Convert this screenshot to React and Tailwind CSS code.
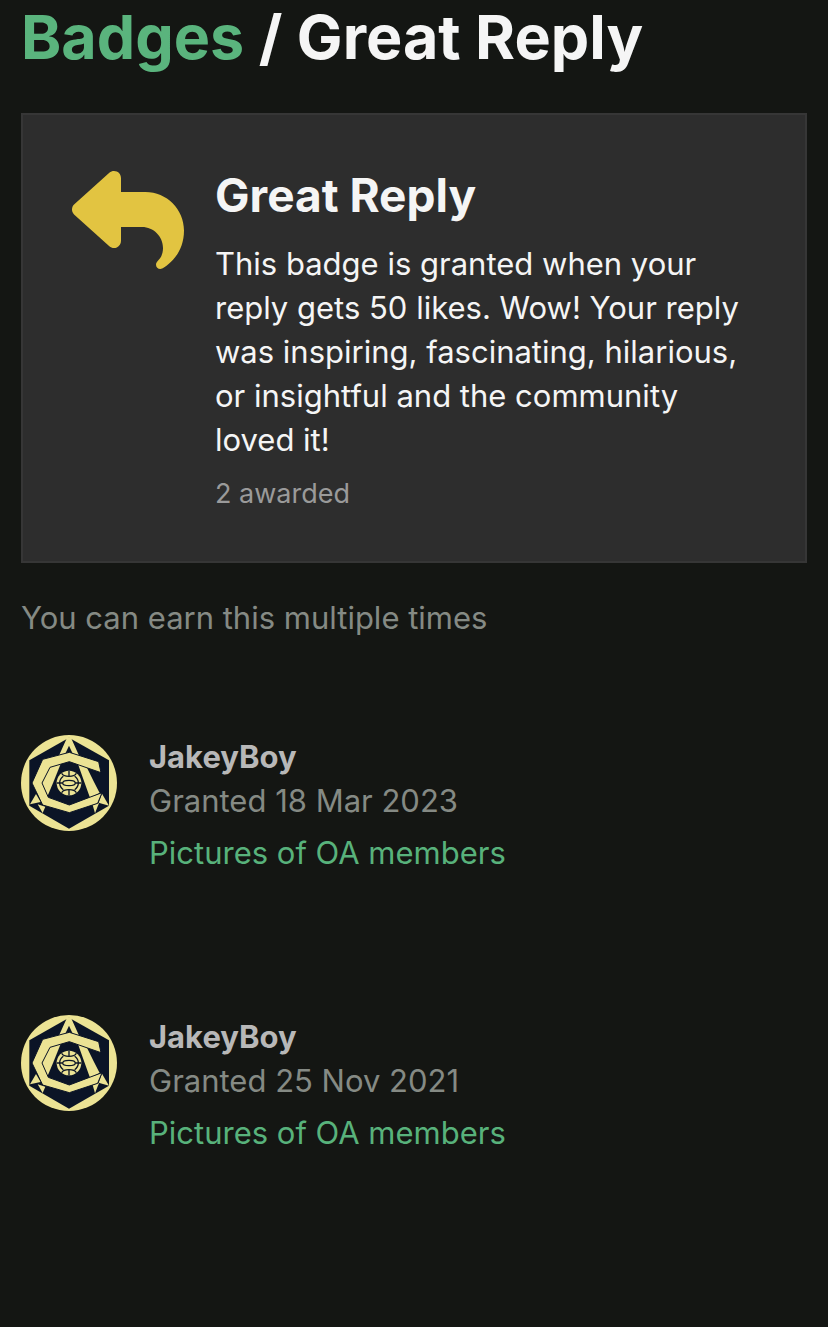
import React from 'react';
import { FaReply } from 'react-icons/fa6';

const grants = [
    { id: 1, username: 'JakeyBoy', date: '18 Mar 2023', topic: 'Pictures of OA members' },
    { id: 2, username: 'JakeyBoy', date: '25 Nov 2021', topic: 'Pictures of OA members' },
];

const Avatar = () => (
    <svg className="w-24 h-24 shrink-0" viewBox="33 30 288 288" aria-hidden="true">
        <circle cx="177" cy="174" r="144" fill="#ece394" />
        <path d="M177 38L297 106V242L177 311L58 242V106Z" fill="#0b1426" />
        {/* A */}
        <g fill="#ece394">
            <path d="M171 38H183L208 94L190 90L177 62L164 90L146 94Z" />
            <path d="M120 122L154 112L130 172L113 212L95 174Z" />
            <path d="M202 112L228 122L252 171L269 204L240 218L223 171Z" />
            <path d="M78 207L92 231L60 238Z" />
            <path d="M83 238L106 245L98 264Z" />
            <path d="M276 206L297 242L266 233Z" />
            <path d="M248 240L267 234L255 265Z" />
        </g>
        {/* C */}
        <path
            d="M178 82L266 110L273 143L178 110L120 127L96 174L115 217L178 240L236 218L276 203L263 235L178 263L98 240L66 174L98 103Z"
            fill="#ece394"
            stroke="#0b1426"
            strokeWidth="3"
        />
        {/* balón */}
        <circle cx="177" cy="174" r="37" fill="#ece394" />
        <g fill="none" stroke="#0b1426" strokeWidth="4">
            <ellipse cx="177" cy="174" rx="19" ry="8" />
            <path d="M141 174H158M196 174H213M177 138V153M177 195V210" />
            <path d="M155 145Q159 154 177 154Q195 154 199 145M155 203Q159 194 177 194Q195 194 199 203" />
            <path d="M160 154Q149 162 149 174Q149 186 160 194M194 154Q205 162 205 174Q205 186 194 194" />
        </g>
    </svg>
);

const BadgeCard = () => (
    <section className="flex gap-[31px] border-2 border-[#363636] bg-[#2d2d2d] px-[49px] pt-[49px] pb-[47px]">
        <FaReply className="w-28 h-28 shrink-0 text-[#e2c441]" />
        <div className="flex-1">
            <h2 className="text-[46px] leading-[62px] font-bold text-[#f5f5f5]">Great Reply</h2>
            <p className="mt-4 text-[31px] leading-[44px] text-[#f5f5f5]">
                This badge is granted when your reply gets 50 likes. Wow! Your reply was inspiring,
                fascinating, hilarious, or insightful and the community loved it!
            </p>
            <p className="mt-3 text-[27px] leading-[40px] text-[#9a9a9a]">2 awarded</p>
        </div>
    </section>
);

const GrantItem = ({ grant }) => (
    <li className="flex gap-8 h-[280px]">
        <Avatar />
        <div className="text-[31px] leading-[44px]">
            <a href="#user" className="block font-bold text-[#b8b8b8]">{grant.username}</a>
            <p className="text-[#858a84]">Granted {grant.date}</p>
            <a href="#topic" className="block mt-2 text-[#58b27b]">{grant.topic}</a>
        </div>
    </li>
);

const App = () => {
    return (
        <main className="min-h-screen bg-[#141613] px-[21px] font-['Inter',sans-serif]">
            <h1 className="pb-[39px] text-[61px] leading-[74px] font-bold text-[#f5f5f5]">
                <a href="#badges" className="text-[#5ab47d]">Badges</a> / Great Reply
            </h1>
            <BadgeCard />
            <p className="mt-8 text-[31px] leading-[46px] text-[#858a84]">
                You can earn this multiple times
            </p>
            <ul className="pt-[94px]">
                {grants.map((grant) => (
                    <GrantItem key={grant.id} grant={grant} />
                ))}
            </ul>
        </main>
    );
};

export default App;
